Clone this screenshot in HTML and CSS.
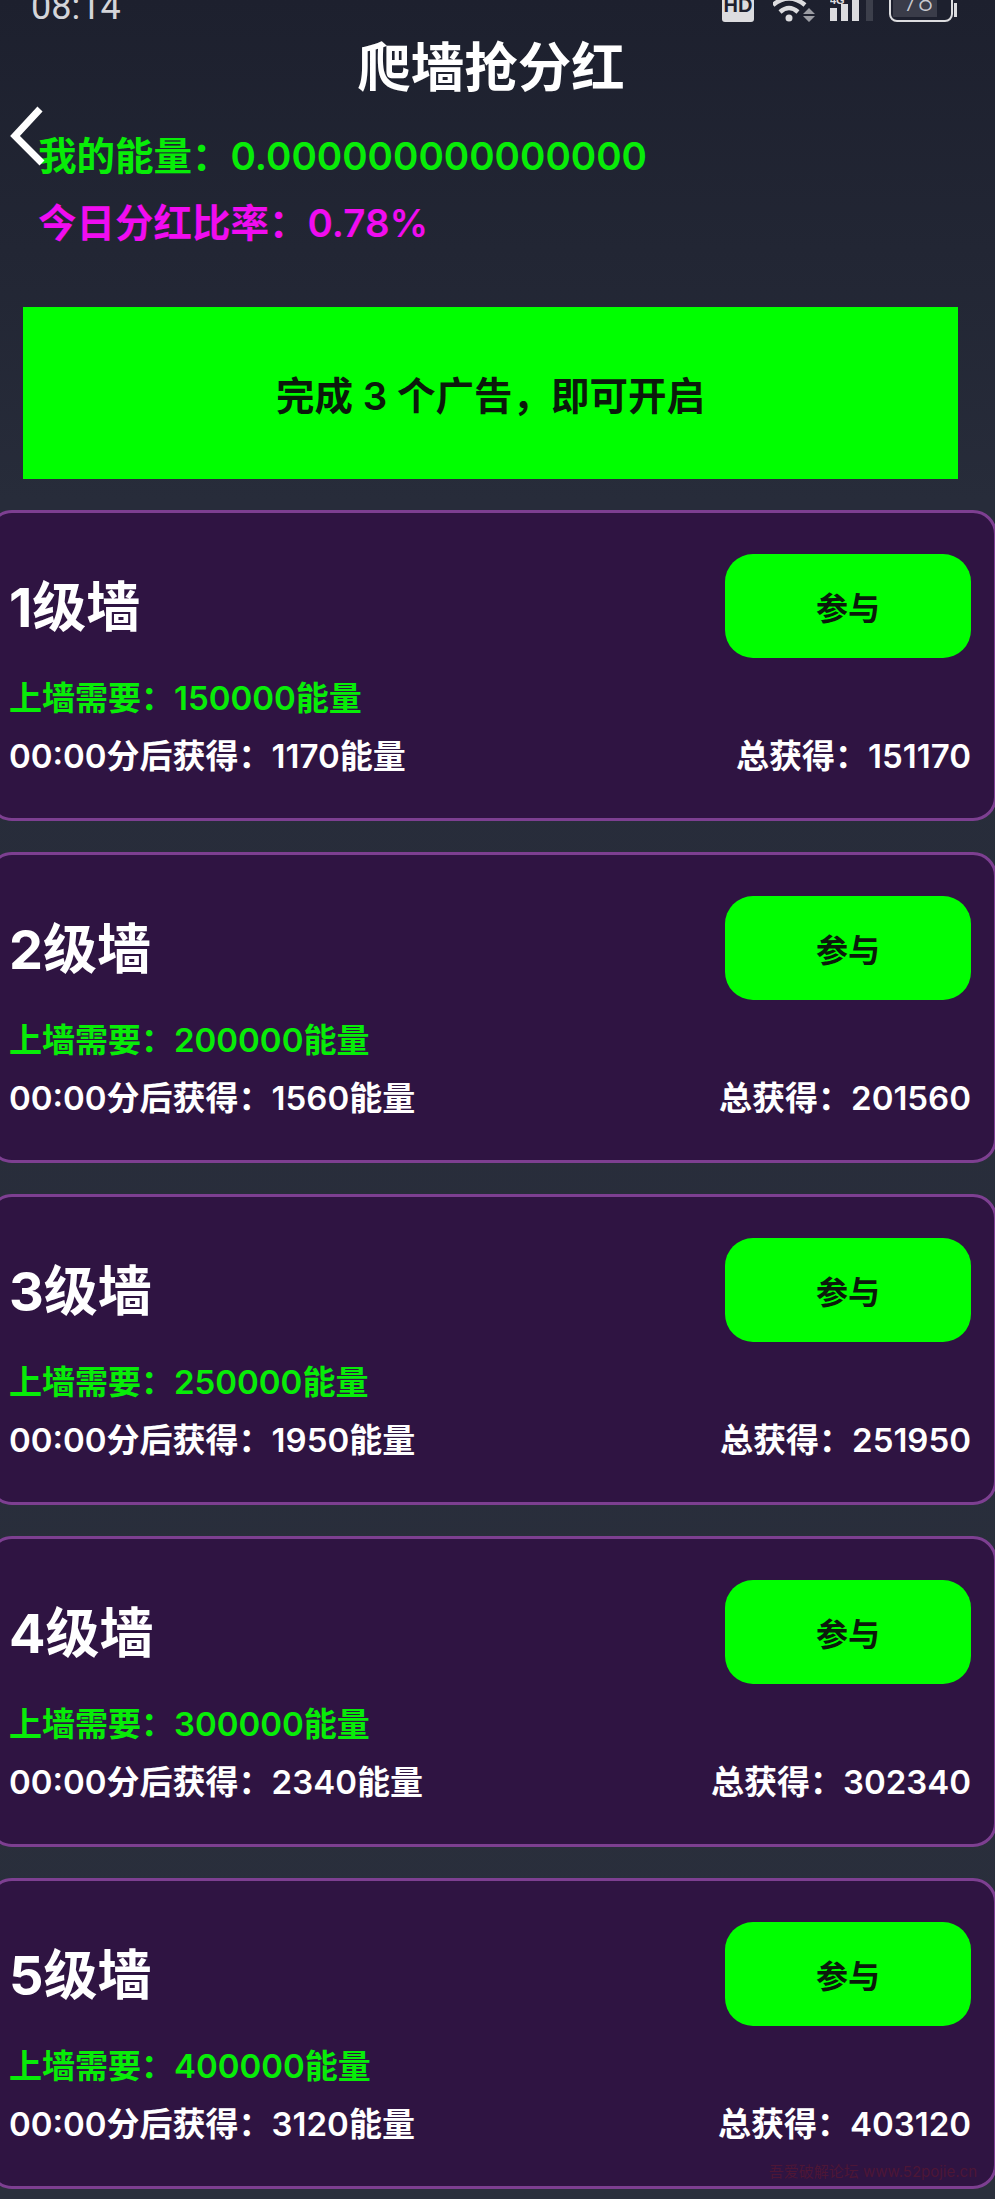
FILE: index.html
```html
<!DOCTYPE html>
<html>
<head>
  <meta charset="UTF-8" />
  <title>爬墙抢分红</title>
  <link rel="stylesheet" href="styles.css">
</head>
<body>
  <div class="status-bar">
    <span class="status-time">08:14</span>
    <div class="status-icons">
      <span class="hd-icon">HD</span>
      <svg class="wifi-icon" width="42" height="30" viewBox="0 0 42 30">
        <path d="M0 13 Q16 0 32 13" fill="none" stroke="#dcdcdf" stroke-width="4.5"/>
        <path d="M7 20 Q16 12 25 20" fill="none" stroke="#dcdcdf" stroke-width="4.5"/>
        <circle cx="16" cy="26" r="3.5" fill="#dcdcdf"/>
        <path d="M30 22 L36 16 L42 22 Z M30 24 L42 24 L36 30 Z" fill="#9b9ca3"/>
      </svg>
      <svg class="signal-icon" width="44" height="30" viewBox="0 0 44 30">
        <text class="signal-type" x="0" y="13">4G</text>
        <rect x="0" y="17" width="7" height="13" fill="#dcdcdf"/>
        <rect x="11" y="13" width="7" height="17" fill="#dcdcdf"/>
        <rect x="22" y="0" width="7" height="30" fill="#dcdcdf"/>
        <rect x="36" y="0" width="7" height="30" fill="#3c3f4b"/>
      </svg>
      <div class="battery">
        <span class="battery-level">78</span>
      </div>
      <span class="battery-cap"></span>
    </div>
  </div>

  <h1 class="page-title">爬墙抢分红</h1>

  <svg class="back-icon" width="36" height="60" viewBox="0 0 36 60">
    <path d="M31 3 L6 30 L33 57" fill="none" stroke="#fff" stroke-width="7"/>
  </svg>

  <div class="summary">
    <div class="energy">我的能量：0.000000000000000</div>
    <div class="rate">今日分红比率：0.78%</div>
  </div>

  <div class="ad-banner">完成 3 个广告，即可开启</div>

  <div class="wall-card">
    <div class="wall-top">
      <div class="wall-name">1级墙</div>
      <button class="join-btn">参与</button>
    </div>
    <div class="wall-need">上墙需要：150000能量</div>
    <div class="wall-bottom">
      <span>00:00分后获得：1170能量</span>
      <span>总获得：151170</span>
    </div>
  </div>

  <div class="wall-card">
    <div class="wall-top">
      <div class="wall-name">2级墙</div>
      <button class="join-btn">参与</button>
    </div>
    <div class="wall-need">上墙需要：200000能量</div>
    <div class="wall-bottom">
      <span>00:00分后获得：1560能量</span>
      <span>总获得：201560</span>
    </div>
  </div>

  <div class="wall-card">
    <div class="wall-top">
      <div class="wall-name">3级墙</div>
      <button class="join-btn">参与</button>
    </div>
    <div class="wall-need">上墙需要：250000能量</div>
    <div class="wall-bottom">
      <span>00:00分后获得：1950能量</span>
      <span>总获得：251950</span>
    </div>
  </div>

  <div class="wall-card">
    <div class="wall-top">
      <div class="wall-name">4级墙</div>
      <button class="join-btn">参与</button>
    </div>
    <div class="wall-need">上墙需要：300000能量</div>
    <div class="wall-bottom">
      <span>00:00分后获得：2340能量</span>
      <span>总获得：302340</span>
    </div>
  </div>

  <div class="wall-card">
    <div class="wall-top">
      <div class="wall-name">5级墙</div>
      <button class="join-btn">参与</button>
    </div>
    <div class="wall-need">上墙需要：400000能量</div>
    <div class="wall-bottom">
      <span>00:00分后获得：3120能量</span>
      <span>总获得：403120</span>
    </div>
  </div>

  <div class="watermark">吾爱破解论坛 www.52pojie.cn</div>
</body>
</html>
```

FILE: styles.css
```css
html, body {
  height: 2199px;
}
body {
  margin: 0;
  position: relative;
  overflow: hidden;
  font-family: Inter, "Noto Sans CJK SC", sans-serif;
  background: linear-gradient(180deg, #1d202e 0, #272c3a 500px, #2a2f3c 100%);
  color: #fff;
}
.status-bar {
  display: flex;
  justify-content: space-between;
  align-items: flex-end;
  height: 22px;
  padding: 0 38px 0 31px;
  overflow: hidden;
}
.status-time {
  font-family: Roboto, sans-serif;
  font-size: 36px;
  line-height: 40px;
  color: #d4d5d9;
  margin-bottom: -5px;
  flex: none;
}
.status-icons {
  display: flex;
  align-items: flex-end;
  flex: none;
}
.hd-icon {
  width: 32px;
  height: 30px;
  background: #dcdcdf;
  border-radius: 3px;
  color: #1d202e;
  font-family: "Liberation Sans", sans-serif;
  font-size: 20px;
  font-weight: bold;
  line-height: 26px;
  text-align: center;
}
.wifi-icon {
  margin-left: 19px;
}
.signal-icon {
  margin-left: 15px;
  margin-bottom: 1px;
}
.signal-type {
  font-family: "Liberation Sans", sans-serif;
  font-size: 11px;
  font-weight: bold;
  fill: #dcdcdf;
}
.battery {
  width: 64px;
  height: 36px;
  margin-left: 15px;
  border: 2px solid #dcdcdf;
  border-radius: 8px;
  background: #1d202e;
  box-sizing: border-box;
  padding: 0 0 3px 2px;
  display: flex;
  align-items: flex-end;
}
.battery-level {
  display: block;
  width: 44px;
  box-sizing: border-box;
  padding-right: 4px;
  background: #3a3c49;
  color: #c9cad0;
  font-family: Roboto, sans-serif;
  font-size: 27px;
  font-weight: 300;
  line-height: 30px;
  text-align: right;
}
.battery-cap {
  width: 3px;
  height: 14px;
  margin: 0 0 5px 1px;
  background: #dcdcdf;
}
.page-title {
  margin: 15px 0 0;
  padding-right: 13px;
  font-size: 53.5px;
  line-height: 62px;
  font-weight: 700;
  text-align: center;
}
.back-icon {
  position: absolute;
  left: 9px;
  top: 106px;
}
.summary {
  padding: 34px 0 0 38px;
  font-size: 38.5px;
  font-weight: 600;
}
.energy {
  color: #08ec08;
  line-height: 46px;
}
.rate {
  color: #f00cf0;
  line-height: 46px;
  margin-top: 21px;
}
.ad-banner {
  margin: 61px 37px 0 23px;
  height: 172px;
  background: #00ff00;
  color: #0b1a0b;
  font-size: 38.5px;
  font-weight: 600;
  display: flex;
  align-items: center;
  justify-content: center;
}
.wall-card {
  box-sizing: border-box;
  height: 311px;
  margin: 31px -2px 0 -12px;
  padding: 41px 23px 0 18px;
  background: #2f1442;
  border: 3px solid #7d3f91;
  border-radius: 24px;
}
.wall-top {
  display: flex;
  justify-content: space-between;
  align-items: center;
  height: 104px;
}
.wall-name {
  font-size: 54px;
  font-weight: 700;
  margin-top: -5px;
}
.join-btn {
  width: 246px;
  height: 104px;
  border: none;
  border-radius: 28px;
  background: #00ff00;
  color: #0b1a0b;
  font-family: inherit;
  font-size: 32px;
  font-weight: 600;
  padding: 0;
}
.wall-need {
  margin-top: 20px;
  color: #08ec08;
  font-size: 33px;
  font-weight: 600;
  line-height: 40px;
}
.wall-bottom {
  margin-top: 18px;
  display: flex;
  justify-content: space-between;
  font-size: 33px;
  font-weight: 600;
  line-height: 40px;
}
.watermark {
  position: absolute;
  right: 18px;
  top: 2163px;
  color: #4d1636;
  font-size: 15px;
  line-height: 18px;
}
```
